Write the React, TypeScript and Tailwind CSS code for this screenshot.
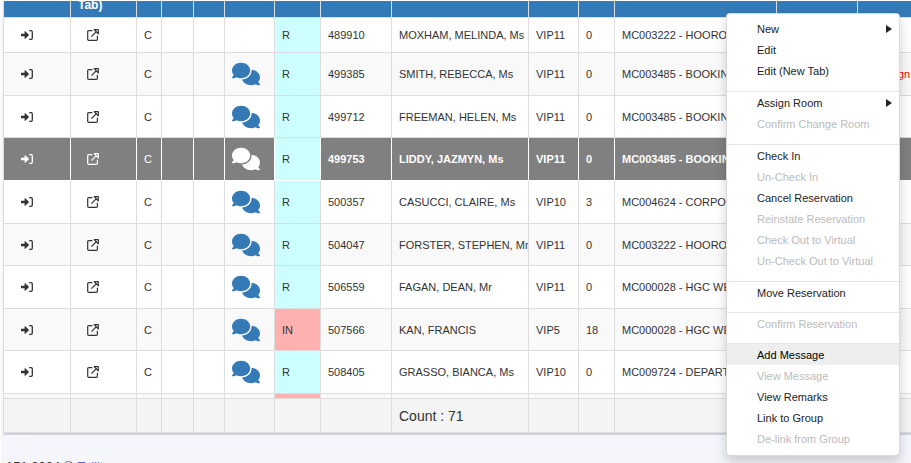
import { FaComments } from "react-icons/fa6";

type Row = {
  id: string;
  name: string;
  vip: string;
  nights: string;
  company: string;
  status: "R" | "IN";
  height: string;
  message: boolean;
  selected?: boolean;
  note?: string;
};

const rows: Row[] = [
  { id: "489910", name: "MOXHAM, MELINDA, Ms", vip: "VIP11", nights: "0", company: "MC003222 - HOOROO", status: "R", height: "h-[35px]", message: false },
  { id: "499385", name: "SMITH, REBECCA, Ms", vip: "VIP11", nights: "0", company: "MC003485 - BOOKING", status: "R", height: "h-[43px]", message: true, note: "Assign" },
  { id: "499712", name: "FREEMAN, HELEN, Ms", vip: "VIP11", nights: "0", company: "MC003485 - BOOKING", status: "R", height: "h-[42px]", message: true },
  { id: "499753", name: "LIDDY, JAZMYN, Ms", vip: "VIP11", nights: "0", company: "MC003485 - BOOKING", status: "R", height: "h-[43px]", message: true, selected: true },
  { id: "500357", name: "CASUCCI, CLAIRE, Ms", vip: "VIP10", nights: "3", company: "MC004624 - CORPORATE", status: "R", height: "h-[43px]", message: true },
  { id: "504047", name: "FORSTER, STEPHEN, Mr", vip: "VIP11", nights: "0", company: "MC003222 - HOOROO", status: "R", height: "h-[42px]", message: true },
  { id: "506559", name: "FAGAN, DEAN, Mr", vip: "VIP11", nights: "0", company: "MC000028 - HGC WEB", status: "R", height: "h-[43px]", message: true },
  { id: "507566", name: "KAN, FRANCIS", vip: "VIP5", nights: "18", company: "MC000028 - HGC WEB", status: "IN", height: "h-[42px]", message: true },
  { id: "508405", name: "GRASSO, BIANCA, Ms", vip: "VIP10", nights: "0", company: "MC009724 - DEPARTMENT", status: "R", height: "h-[43px]", message: true },
];

const menu: { label: string; disabled?: boolean; sub?: boolean; active?: boolean }[][] = [
  [{ label: "New", sub: true }, { label: "Edit" }, { label: "Edit (New Tab)" }],
  [{ label: "Assign Room", sub: true }, { label: "Confirm Change Room", disabled: true }],
  [
    { label: "Check In" },
    { label: "Un-Check In", disabled: true },
    { label: "Cancel Reservation" },
    { label: "Reinstate Reservation", disabled: true },
    { label: "Check Out to Virtual", disabled: true },
    { label: "Un-Check Out to Virtual", disabled: true },
  ],
  [{ label: "Move Reservation" }],
  [{ label: "Confirm Reservation", disabled: true }],
  [
    { label: "Add Message", active: true },
    { label: "View Message", disabled: true },
    { label: "View Remarks" },
    { label: "Link to Group" },
    { label: "De-link from Group", disabled: true },
  ],
];

const columns = [
  "w-[67px]", "w-[66px]", "w-[25px]", "w-[32px]", "w-[31px]", "w-[50px]", "w-[46px]",
  "w-[71px]", "w-[137px]", "w-[50px]", "w-[36px]", "w-[162px]", "w-[81px]", "",
];

function CheckInIcon() {
  return (
    <svg width="12" height="10" viewBox="0 0 12 10" fill="none" aria-hidden="true">
      <path d="M0.5 3.7H3.6V1.4Q3.7 0.9 4.2 1.2L7.7 4.6Q8 5 7.7 5.4L4.2 8.8Q3.7 9.1 3.6 8.6V6.3H0.5Q0 6.3 0 5.8V4.2Q0 3.7 0.5 3.7Z" fill="currentColor" />
      <path d="M8.2 0.7H10.1Q11.3 0.7 11.3 1.9V8.1Q11.3 9.3 10.1 9.3H8.2" stroke="currentColor" strokeWidth="1.3" />
    </svg>
  );
}

function NewTabIcon() {
  return (
    <svg width="12" height="12" viewBox="0 0 12 12" fill="none" stroke="currentColor" strokeWidth="1.2" aria-hidden="true">
      <path d="M5.4 1.6H1.8Q0.7 1.6 0.7 2.7V10.2Q0.7 11.3 1.8 11.3H9.3Q10.4 11.3 10.4 10.2V6.8" />
      <path d="M4.4 7.6L9.6 2.4" />
      <path d="M7.2 0.7H11.3V4.8Z" strokeLinejoin="round" />
    </svg>
  );
}

function ReservationRow({ row, striped }: { row: Row; striped: boolean }) {
  const line = row.selected ? "border-white" : "border-[#dddddd]";
  const cell = `overflow-hidden whitespace-nowrap border-b border-r pl-[7px] last:border-r-0 ${line}`;
  const tint = row.selected ? "bg-[#808080] text-white" : striped ? "bg-[#f9f9f9]" : "bg-white";
  const bold = row.selected ? "font-bold" : "";
  return (
    <tr className={`${row.height} ${tint}`}>
      <td className={cell}>
        <button type="button" aria-label="Check in" className="ml-[10px] block"><CheckInIcon /></button>
      </td>
      <td className={cell}>
        <button type="button" aria-label="Open in new tab" className="ml-[9px] block"><NewTabIcon /></button>
      </td>
      <td className={cell}>C</td>
      <td className={cell} />
      <td className={cell} />
      <td className={cell}>
        {row.message && (
          <button type="button" aria-label="Messages" className={`block ${row.selected ? "text-white" : "text-[#337ab7]"}`}>
            <FaComments className="h-6 w-7" />
          </button>
        )}
      </td>
      <td className={`${cell} text-[#333333] ${row.status === "R" ? "bg-[#ccffff]" : "bg-[#ffb0b0]"}`}>{row.status}</td>
      <td className={`${cell} ${bold}`}>{row.id}</td>
      <td className={`${cell} ${bold}`}>{row.name}</td>
      <td className={`${cell} ${bold}`}>{row.vip}</td>
      <td className={`${cell} ${bold}`}>{row.nights}</td>
      <td className={`${cell} ${bold}`}>{row.company}</td>
      <td className={cell} />
      <td className={`${cell} text-[#ff0000]`}><span className="pl-3">{row.note}</span></td>
    </tr>
  );
}

function ContextMenu() {
  return (
    <div role="menu" className="absolute left-[725px] top-3 w-[174px] rounded border border-black/15 bg-white pb-[6px] pt-1 shadow-[0_6px_12px_rgba(0,0,0,0.18)]">
      {menu.map((group, i) => (
        <div
          key={group[0].label}
          role="group"
          className={`${i > 0 ? "border-t border-[#e5e5e5]" : ""} ${i === menu.length - 1 ? "" : group.length > 1 ? "pb-[10px]" : "pb-[9px]"}`}
        >
          {group.map((item) => (
            <button
              key={item.label}
              type="button"
              role="menuitem"
              disabled={item.disabled}
              className={`flex h-[21px] w-full items-center justify-between pl-[30px] pr-[7px] text-left ${
                item.disabled ? "text-[#bbbbbb]" : item.active ? "bg-[#eeeeee] text-black" : "text-[#222222]"
              }`}
            >
              {item.label}
              {item.sub && (
                <svg width="6" height="8" viewBox="0 0 6 8" fill="currentColor" aria-hidden="true">
                  <path d="M0 0L6 4L0 8Z" />
                </svg>
              )}
            </button>
          ))}
        </div>
      ))}
    </div>
  );
}

export default function App() {
  return (
    <div className="relative h-screen overflow-hidden border-l border-t border-white bg-[#f5f6fb] font-['Liberation_Sans',Arial,sans-serif] text-[11px] leading-4 text-[#333333]">
      <div className="ml-[2px] border-b-2 border-l border-b-[#cfd3df] border-l-[#dddddd]">
        <table className="w-full table-fixed border-separate border-spacing-0">
          <colgroup>
            {columns.map((width, i) => <col key={i} className={width} />)}
          </colgroup>
          <thead>
            <tr className="h-[17px] bg-[#337ab7] text-white">
              {columns.map((_, i) => (
                <th key={i} className="border-b border-r border-[#dddddd] pl-[7px] text-left last:border-r-0">
                  {i === 1 && <div className="flex h-4 items-end overflow-hidden text-xs leading-6"><span>Tab)</span></div>}
                </th>
              ))}
            </tr>
          </thead>
          <tbody>
            {rows.map((row, i) => <ReservationRow key={row.id} row={row} striped={i % 2 === 1} />)}
            <tr className="h-[5px] bg-[#f9f9f9]">
              {columns.map((_, i) => (
                <td key={i} className={`border-b border-r border-[#dddddd] last:border-r-0 ${i === 6 ? "bg-[#ffb0b0]" : ""}`} />
              ))}
            </tr>
          </tbody>
          <tfoot>
            <tr className="h-[34px] bg-[#f4f4f4] text-sm">
              {columns.map((_, i) => (
                <td key={i} className="whitespace-nowrap border-b border-r border-[#dddddd] pl-[7px] last:border-r-0">
                  {i === 8 ? "Count : 71" : ""}
                </td>
              ))}
            </tr>
          </tfoot>
        </table>
      </div>
      <footer className="flex gap-1 pl-[5px] pt-6 text-[13px]">
        <span>151 2024 ©</span>
        <a href="#" className="text-[#5867dd]">Tellit</a>
      </footer>
      <ContextMenu />
    </div>
  );
}
